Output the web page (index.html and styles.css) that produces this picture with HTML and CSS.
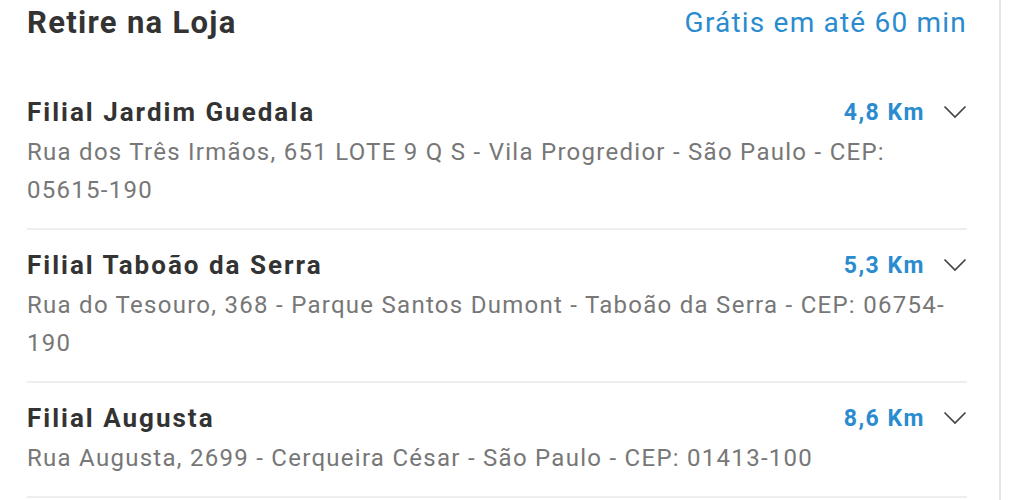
FILE: index.html
```html
<!DOCTYPE html>
<html lang="pt-BR">
<head>
<meta charset="utf-8">
<link rel="stylesheet" href="styles.css">
</head>
<body>
<div class="panel">
  <div class="header">
    <h1 class="title">Retire na Loja</h1>
    <span class="free">Grátis em até 60 min</span>
  </div>
  <ul class="stores">
    <li class="store">
      <div class="store-top">
        <span class="store-name">Filial Jardim Guedala</span>
        <span class="dist">4,8 Km</span>
        <svg class="chev" viewBox="0 0 24 14" width="24" height="14"><path d="M1.5 1.5 L12 12 L22.5 1.5" fill="none" stroke="#444" stroke-width="1.7"/></svg>
      </div>
      <p class="addr">Rua dos Três Irmãos, 651 LOTE 9 Q S - Vila Progredior - São Paulo - CEP: 05615-190</p>
    </li>
    <li class="store">
      <div class="store-top">
        <span class="store-name">Filial Taboão da Serra</span>
        <span class="dist">5,3 Km</span>
        <svg class="chev" viewBox="0 0 24 14" width="24" height="14"><path d="M1.5 1.5 L12 12 L22.5 1.5" fill="none" stroke="#444" stroke-width="1.7"/></svg>
      </div>
      <p class="addr">Rua do Tesouro, 368 - Parque Santos Dumont - Taboão da Serra - CEP: 06754-190</p>
    </li>
    <li class="store">
      <div class="store-top">
        <span class="store-name">Filial Augusta</span>
        <span class="dist">8,6 Km</span>
        <svg class="chev" viewBox="0 0 24 14" width="24" height="14"><path d="M1.5 1.5 L12 12 L22.5 1.5" fill="none" stroke="#444" stroke-width="1.7"/></svg>
      </div>
      <p class="addr">Rua Augusta, 2699 - Cerqueira César - São Paulo - CEP: 01413-100</p>
    </li>
  </ul>
</div>
</body>
</html>
```

FILE: styles.css
```css
html, body {
  margin: 0;
  padding: 0;
  background: #fff;
}
body {
  font-family: Roboto, "Liberation Sans", sans-serif;
  height: 500px;
  overflow: hidden;
}
.panel {
  width: 940px;
  padding: 0 32px 0 27px;
  border-right: 2px solid #e4e4e4;
  min-height: 500px;
}
.header {
  display: flex;
  justify-content: space-between;
  align-items: center;
  height: 44px;
}
.title {
  margin: 0;
  font-size: 31px;
  font-weight: 700;
  letter-spacing: 1.3px;
  color: #333;
}
.free {
  font-size: 28px;
  letter-spacing: 1.2px;
  color: #2a8ccf;
}
.stores {
  list-style: none;
  margin: 0;
  padding: 0;
}
.store {
  border-bottom: 2px solid #eeeeee;
  padding: 50px 0 19px;
}
.store + .store {
  padding-top: 17px;
}
.store-top {
  display: flex;
  align-items: center;
  height: 36px;
}
.store-name {
  flex: 1;
  font-size: 26px;
  font-weight: 700;
  letter-spacing: 2px;
  color: #333;
}
.dist {
  font-size: 23px;
  font-weight: 700;
  letter-spacing: 1.5px;
  color: #2a8ccf;
  margin-right: 18px;
}
.chev {
  display: block;
}
.addr {
  margin: 3px 0 0;
  font-size: 24px;
  letter-spacing: 1.27px;
  line-height: 38px;
  color: #777;
}
```
